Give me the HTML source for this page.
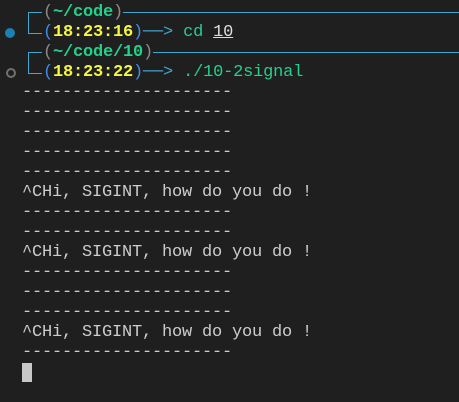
<!DOCTYPE html>
<html><head><style>
html,body{margin:0;padding:0;background:#1f1f1f;width:459px;height:402px;overflow:hidden}
.t{position:absolute;left:0;font-family:"Liberation Mono",monospace;font-size:17px;letter-spacing:-0.2px;line-height:20px;white-space:pre;color:#cccccc}
.b{position:absolute;background:#3fa8d0}
.p{color:#8a8a8a}.g{color:#23d18b}.y{color:#f5f543;font-weight:bold}.bl{color:#3b8eea}.c{color:#3fa8d0}
.gb{color:#23d18b;font-weight:bold}
</style></head><body>
<div class="b" style="left:28px;top:12px;width:1px;height:22px"></div>
<div class="b" style="left:28px;top:12px;width:14px;height:1px"></div>
<div class="b" style="left:28px;top:33px;width:14px;height:1px"></div>
<div class="b" style="left:123px;top:12px;width:336px;height:1px"></div>
<div class="t" style="left:43px;top:3px"><span class="p">(</span><span class="gb">~/code</span><span class="p">)</span></div>
<div class="t" style="left:43px;top:23px"><span class="bl">(</span><span class="y">18:23:16</span><span class="bl">)</span><span class="c">──&gt;</span> <span class="g">cd</span> <span style="text-decoration:underline;color:#ddd">10</span></div>
<div style="position:absolute;left:5px;top:28px;width:10px;height:10px;border-radius:50%;background:#1b80b2"></div>
<div class="b" style="left:28px;top:52px;width:1px;height:22px"></div>
<div class="b" style="left:28px;top:52px;width:14px;height:1px"></div>
<div class="b" style="left:28px;top:73px;width:14px;height:1px"></div>
<div class="b" style="left:153px;top:52px;width:306px;height:1px"></div>
<div class="t" style="left:43px;top:43px"><span class="p">(</span><span class="gb">~/code/10</span><span class="p">)</span></div>
<div class="t" style="left:43px;top:63px"><span class="bl">(</span><span class="y">18:23:22</span><span class="bl">)</span><span class="c">──&gt;</span> <span class="g">./10-2signal</span></div>
<div style="position:absolute;left:6px;top:68px;width:6px;height:6px;border-radius:50%;border:2px solid #707070"></div>
<div class="t" style="left:22px;top:83px">---------------------
---------------------
---------------------
---------------------
---------------------
^CHi, SIGINT, how do you do !
---------------------
---------------------
^CHi, SIGINT, how do you do !
---------------------
---------------------
---------------------
^CHi, SIGINT, how do you do !
---------------------</div>
<div style="position:absolute;left:22px;top:363px;width:10px;height:19px;background:#c8c8c8"></div>
</body></html>
